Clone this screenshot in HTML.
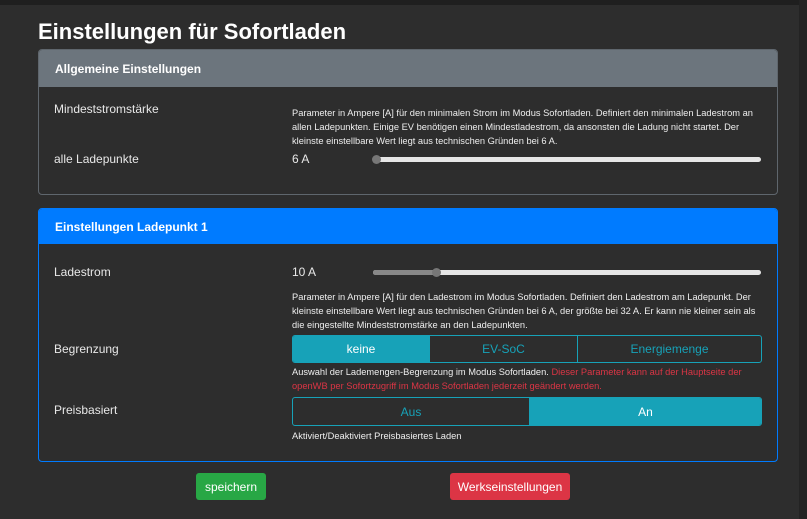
<!DOCTYPE html>
<html><head><meta charset="utf-8"><style>
*{box-sizing:border-box;margin:0;padding:0}
body{width:807px;height:519px;background:#2d2d2d;font-family:"Liberation Sans",sans-serif;color:#e8e8e8;position:relative;overflow:hidden}
.top{position:absolute;left:0;top:0;width:807px;height:5px;background:#1f1f1f}
.rs{position:absolute;right:0;top:0;width:8px;height:519px;background:#232323}
.a{position:absolute;white-space:nowrap}
h1{position:absolute;left:38px;top:19px;font-size:22px;font-weight:bold;color:#fff}
.card{position:absolute;left:38px;width:740px;border:1px solid #5f666d;border-radius:4px;overflow:hidden}
.hd{height:37px;color:#fff;font-weight:bold;font-size:12px;padding:12px 16px}
.lbl{font-size:12px;color:#e8e8e8}
.sm{font-size:9.3px;line-height:14px;color:#eee;white-space:normal;width:470px}
.tr{position:absolute;height:5px;background:#e6e6e6;border-radius:3px;left:373px;width:388px}
.th{position:absolute;width:9px;height:9px;border-radius:50%;background:#777}
.bg{position:absolute;display:flex;border:1px solid #17a2b8;border-radius:3px;overflow:hidden;left:292px;width:470px}
.bg div{display:flex;align-items:center;justify-content:center;font-size:12px;color:#17a2b8;border-right:1px solid #17a2b8}
.bg div:last-child{border-right:none}
.bg .on{background:#17a2b8;color:#fff}
.btn{position:absolute;top:473px;height:27px;border-radius:3px;color:#fff;font-size:12px;display:flex;align-items:center;justify-content:center}
</style></head><body>
<div class="top"></div><div class="rs"></div>
<h1>Einstellungen für Sofortladen</h1>
<div class="card" style="top:49px;height:146px"><div class="hd" style="background:#6c757d">Allgemeine Einstellungen</div></div>
<div class="a lbl" style="left:54px;top:102px">Mindeststromstärke</div>
<div class="a sm" style="left:292px;top:106px">Parameter in Ampere [A] für den minimalen Strom im Modus Sofortladen. Definiert den minimalen Ladestrom an allen Ladepunkten. Einige EV benötigen einen Mindestladestrom, da ansonsten die Ladung nicht startet. Der kleinste einstellbare Wert liegt aus technischen Gründen bei 6 A.</div>
<div class="a lbl" style="left:54px;top:152px">alle Ladepunkte</div>
<div class="a lbl" style="left:292px;top:152px">6 A</div>
<div class="tr" style="top:157px"></div><div class="th" style="left:372px;top:155px"></div>

<div class="card" style="top:208px;height:254px;border-color:#007bff"><div class="hd" style="background:#007bff;height:35px;padding-top:11px">Einstellungen Ladepunkt 1</div></div>
<div class="a lbl" style="left:54px;top:265px">Ladestrom</div>
<div class="a lbl" style="left:292px;top:265px">10 A</div>
<div class="tr" style="top:270px"></div><div style="position:absolute;left:373px;top:270px;width:63px;height:5px;background:#888;border-radius:3px"></div><div class="th" style="left:432px;top:268px"></div>
<div class="a sm" style="left:292px;top:290px">Parameter in Ampere [A] für den Ladestrom im Modus Sofortladen. Definiert den Ladestrom am Ladepunkt. Der kleinste einstellbare Wert liegt aus technischen Gründen bei 6 A, der größte bei 32 A. Er kann nie kleiner sein als die eingestellte Mindeststromstärke an den Ladepunkten.</div>
<div class="a lbl" style="left:54px;top:342px">Begrenzung</div>
<div class="bg" style="top:335px;height:28px"><div class="on" style="width:137px">keine</div><div style="width:148px">EV-SoC</div><div style="flex:1">Energiemenge</div></div>
<div class="a sm" style="left:292px;top:365px">Auswahl der Lademengen-Begrenzung im Modus Sofortladen. <span style="color:#dc3545">Dieser Parameter kann auf der Hauptseite der openWB per Sofortzugriff im Modus Sofortladen jederzeit geändert werden.</span></div>
<div class="a lbl" style="left:54px;top:403px">Preisbasiert</div>
<div class="bg" style="top:397px;height:29px"><div style="width:237px">Aus</div><div class="on" style="flex:1">An</div></div>
<div class="a sm" style="left:292px;top:429px">Aktiviert/Deaktiviert Preisbasiertes Laden</div>
<div class="btn" style="left:196px;width:70px;background:#28a745">speichern</div>
<div class="btn" style="left:450px;width:120px;background:#dc3545">Werkseinstellungen</div>
</body></html>
